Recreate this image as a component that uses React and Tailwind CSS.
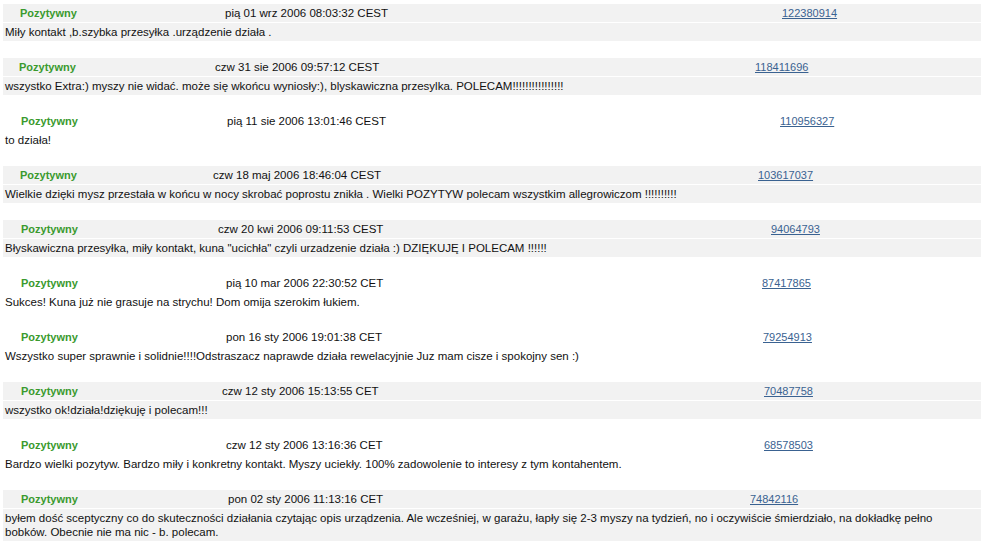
import React from "react";

const blocks = [
  { gray: true, poz: "ml-[17px] w-[205px]", date: "w-[557px]", d: "pią 01 wrz 2006 08:03:32 CEST", n: "122380914", c: "Miły kontakt ,b.szybka przesyłka .urządzenie działa ." },
  { gray: true, poz: "ml-[16px] w-[196px]", date: "w-[540px]", d: "czw 31 sie 2006 09:57:12 CEST", n: "118411696", c: "wszystko Extra:) myszy nie widać. może się wkońcu wyniosły:), blyskawiczna przesylka. POLECAM!!!!!!!!!!!!!!!!" },
  { gray: false, poz: "ml-[18px] w-[206px]", date: "w-[553px]", d: "pią 11 sie 2006 13:01:46 CEST", n: "110956327", c: "to działa!" },
  { gray: true, poz: "ml-[17px] w-[193px]", date: "w-[545px]", d: "czw 18 maj 2006 18:46:04 CEST", n: "103617037", c: "Wielkie dzięki mysz przestała w końcu w nocy skrobać poprostu znikła . Wielki POZYTYW polecam wszystkim allegrowiczom !!!!!!!!!!" },
  { gray: true, poz: "ml-[18px] w-[197px]", date: "w-[553px]", d: "czw 20 kwi 2006 09:11:53 CEST", n: "94064793", c: "Błyskawiczna przesyłka, miły kontakt, kuna \"ucichła\" czyli urzadzenie działa :) DZIĘKUJĘ I POLECAM !!!!!!" },
  { gray: false, poz: "ml-[18px] w-[205px]", date: "w-[536px]", d: "pią 10 mar 2006 22:30:52 CET", n: "87417865", c: "Sukces! Kuna już nie grasuje na strychu! Dom omija szerokim łukiem." },
  { gray: false, poz: "ml-[18px] w-[205px]", date: "w-[537px]", d: "pon 16 sty 2006 19:01:38 CET", n: "79254913", c: "Wszystko super sprawnie i solidnie!!!!Odstraszacz naprawde działa rewelacyjnie Juz mam cisze i spokojny sen :)" },
  { gray: true, poz: "ml-[18px] w-[201px]", date: "w-[542px]", d: "czw 12 sty 2006 15:13:55 CET", n: "70487758", c: "wszystko ok!działa!dziękuję i polecam!!!" },
  { gray: false, poz: "ml-[18px] w-[205px]", date: "w-[538px]", d: "czw 12 sty 2006 13:16:36 CET", n: "68578503", c: "Bardzo wielki pozytyw. Bardzo miły i konkretny kontakt. Myszy uciekły. 100% zadowolenie to interesy z tym kontahentem." },
];

function Block({ b }) {
  const bg = b.gray ? "bg-[#f2f2f2]" : "bg-white";
  return (
    <div className="flex flex-col gap-[1px] mb-[17px]">
      <div className={"flex items-center h-[18px] " + bg}>
        <span className={"font-bold text-[11px] text-[#3a9a2e] shrink-0 " + b.poz}>Pozytywny</span>
        <span className={"shrink-0 " + b.date}>{b.d}</span>
        <span className="text-[11px] text-[#3a6291] underline">{b.n}</span>
      </div>
      <div className={"h-[18px] flex items-center pl-[2px] " + bg}>{b.c}</div>
    </div>
  );
}

export default function App() {
  return (
    <div className="w-[981px] h-[545px] overflow-hidden bg-white pt-[4px] pl-[3px] text-[11.5px] text-[#111111] leading-[14px]" style={{ fontFamily: '"Liberation Sans", Arial, sans-serif' }}>
      {blocks.map((b, i) => (
        <Block key={i} b={b} />
      ))}
      <div className="flex flex-col gap-[1px]">
        <div className="flex items-center h-[18px] bg-[#f2f2f2]">
          <span className="font-bold text-[11px] text-[#3a9a2e] shrink-0 ml-[18px] w-[207px]">Pozytywny</span>
          <span className="shrink-0 w-[522px]">pon 02 sty 2006 11:13:16 CET</span>
          <span className="text-[11px] text-[#3a6291] underline">74842116</span>
        </div>
        <div className="bg-[#f2f2f2] pl-[2px] py-[2px] leading-[14px]">
          byłem dość sceptyczny co do skuteczności działania czytając opis urządzenia. Ale wcześniej, w garażu, łapły się 2-3 myszy na tydzień, no i oczywiście śmierdziało, na dokładkę pełno
          <br />
          bobków. Obecnie nie ma nic - b. polecam.
        </div>
      </div>
    </div>
  );
}
